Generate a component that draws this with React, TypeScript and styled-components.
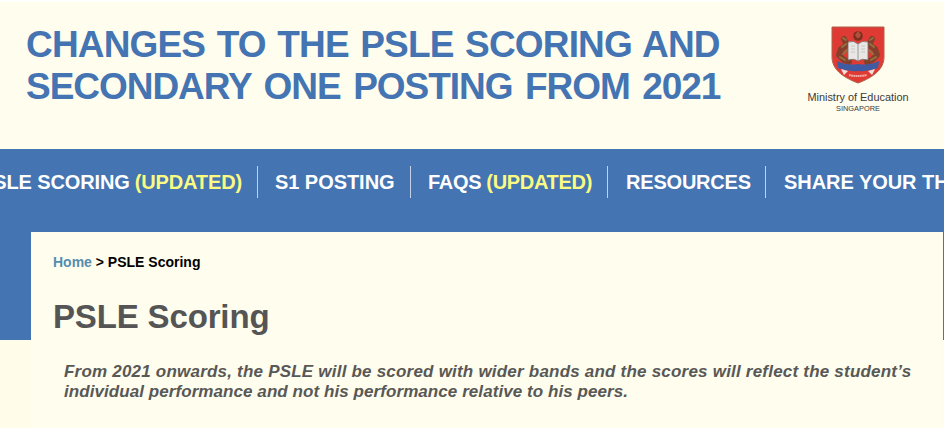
import React from 'react';
import styled, { createGlobalStyle } from 'styled-components';

type MenuItem = {
  label: string
  updated?: boolean
  width: number
  spacing: number
}

const menu: MenuItem[] = [
  { label: 'PSLE SCORING', updated: true, width: 257, spacing: -0.13 },
  { label: 'S1 POSTING', width: 153, spacing: -0.05 },
  { label: 'FAQS', updated: true, width: 197, spacing: -0.3 },
  { label: 'RESOURCES', width: 158, spacing: -0.2 },
  { label: 'SHARE YOUR THOUGHTS', width: 260, spacing: -0.05 },
];

const Crest: React.FC = () => (
  <svg width="54" height="58" viewBox="0 0 54 58">
    <path d="M1 1H53V31C53 43 43 51 27 57C11 51 1 43 1 31Z" fill="#df3b34" stroke="#b0604a" strokeWidth="1" />
    <g fill="none" stroke="#84402c" strokeLinecap="round" strokeLinejoin="round">
      <path d="M13 13L16 19L10 23L8 29L13 34L18 36" strokeWidth="6" />
      <path d="M41 13L38 19L44 23L46 29L41 34L36 36" strokeWidth="6" />
    </g>
    <g fill="none" stroke="#97703f" strokeWidth="2" strokeLinecap="round">
      <path d="M12 12L15 14M15 18L11 21M16 24L12 28M9 31L14 34" />
      <path d="M42 12L39 14M39 18L43 21M38 24L42 28M45 31L40 34" />
    </g>
    <circle cx="27" cy="10" r="4.8" fill="#7b3022" />
    <path d="M24 9L27 5L30 9L28 12H26Z" fill="#b4503a" />
    <path d="M17 16Q23 14 27 18Q31 14 37 16V34Q31 32 27 35Q23 32 17 34Z" fill="#e9e7e5" stroke="#77706d" strokeWidth=".8" />
    <path d="M27 18V35" stroke="#9a9796" strokeWidth="1" />
    <path d="M20 20H24M20 23H24M20 26H24M30 20H34M30 23H34M30 26H34" stroke="#c6c3c1" strokeWidth=".9" />
    <path d="M6 35Q16 40 27 38Q38 40 48 35L47 42Q37 46 27 45Q17 46 7 42Z" fill="#3e5ba3" />
    <path d="M10 43L17 45L13 49ZM44 43L37 45L41 49Z" fill="#f4dfdc" />
    <path d="M18 49Q27 51 36 49" fill="none" stroke="#f2a9a1" strokeWidth="2" strokeDasharray="1.8 .4" />
  </svg>
);

const App: React.FC = () => {
  return (
    <>
      <GlobalStyle />
      <Page>
        <Header>
          <SiteTitle>
            <TitleLine $spacing={-0.84} $wordSpacing={2.1}>CHANGES TO THE PSLE SCORING AND</TitleLine>
            <TitleLine $spacing={-1.04} $wordSpacing={3.3}>SECONDARY ONE POSTING FROM 2021</TitleLine>
          </SiteTitle>
          <Ministry>
            <Crest />
            <MinistryName>Ministry of Education</MinistryName>
            <Country>SINGAPORE</Country>
          </Ministry>
        </Header>
        <Nav>
          {menu.map(({ label, updated, width, spacing }) => (
            <NavItem key={label} $width={width} $spacing={spacing}>
              {label}
              {updated && <Updated>(UPDATED)</Updated>}
            </NavItem>
          ))}
        </Nav>
        <Body>
          <Panel>
            <Breadcrumb>
              <HomeLink href="#">Home</HomeLink> &gt; PSLE Scoring
            </Breadcrumb>
            <Heading>PSLE Scoring</Heading>
            <Lead>
              <LeadLine $spacing={0.21}>
                From 2021 onwards, the PSLE will be scored with wider bands and the scores will reflect the student’s
              </LeadLine>
              <LeadLine $spacing={0.07}>
                individual performance and not his performance relative to his peers.
              </LeadLine>
            </Lead>
          </Panel>
        </Body>
      </Page>
    </>
  )
}

const GlobalStyle = createGlobalStyle`
  * {
    box-sizing: border-box;
  }
  body {
    margin: 0;
    overflow: hidden;
    font-family: "Arial Rounded MT Bold", "Liberation Sans", Arial, sans-serif;
    background: #fffdee;
  }
`;

const Page = styled.div`
  width: 944px;
  height: 428px;
  overflow: hidden;
  border-top: 2px solid #fff;
`;

const Header = styled.header`
  display: flex;
  justify-content: space-between;
  height: 147px;
  padding: 22px 33px 0 26px;
  background: #fffdee;
`;

const SiteTitle = styled.div`
  color: #4474b2;
  font-size: 37px;
  font-weight: bold;
  line-height: 41.5px;
`;

const TitleLine = styled.span<{ $spacing: number, $wordSpacing: number }>`
  display: block;
  letter-spacing: ${({ $spacing }) => $spacing}px;
  word-spacing: ${({ $wordSpacing }) => $wordSpacing}px;
  white-space: nowrap;
`;

const Ministry = styled.div`
  display: flex;
  flex-direction: column;
  align-items: center;
  width: 106px;
  padding-top: 2px;
  color: #3c3a38;
`;

const MinistryName = styled.div`
  margin-top: 7px;
  font-size: 10.9px;
  line-height: 13px;
  white-space: nowrap;
`;

const Country = styled.div`
  font-size: 7.4px;
  line-height: 9px;
`;

const Nav = styled.nav`
  display: flex;
  align-items: flex-start;
  height: 83px;
  padding-top: 17px;
  background: #4474b2;
`;

const NavItem = styled.div<{ $width: number, $spacing: number }>`
  display: flex;
  flex-shrink: 0;
  align-items: center;
  gap: 5px;
  width: ${({ $width }) => $width}px;
  height: 32px;
  padding-left: 17px;
  color: #fff;
  font-size: 20px;
  font-weight: bold;
  letter-spacing: ${({ $spacing }) => $spacing}px;
  white-space: nowrap;
  border-left: 1px solid #c3d2e8;
  &:first-child {
    justify-content: flex-end;
    padding: 0 15px 0 0;
    border-left: none;
  }
  &:nth-child(n + 4) {
    padding-left: 18px;
  }
`;

const Updated = styled.span`
  color: #fbfb82;
`;

const Body = styled.div`
  height: 196px;
  padding: 0 1px 0 31px;
  background: linear-gradient(#4474b2 108.5px, #fffce9 108.5px);
`;

const Panel = styled.main`
  height: 100%;
  padding: 21px 0 0 22px;
  background: #fffdee;
`;

const Breadcrumb = styled.div`
  color: #000;
  font-size: 14px;
  font-weight: bold;
  line-height: 18px;
`;

const HomeLink = styled.a`
  color: #558db0;
  text-decoration: none;
`;

const Heading = styled.h1`
  margin: 26px 0 0;
  color: #555;
  font-size: 33px;
  letter-spacing: -0.15px;
  line-height: 40px;
`;

const Lead = styled.p`
  margin: 25px 0 0 11px;
  color: #585856;
  font-size: 17px;
  font-style: italic;
  font-weight: bold;
  line-height: 20px;
`;

const LeadLine = styled.span<{ $spacing: number }>`
  display: block;
  letter-spacing: ${({ $spacing }) => $spacing}px;
  white-space: nowrap;
`;

export default App;
